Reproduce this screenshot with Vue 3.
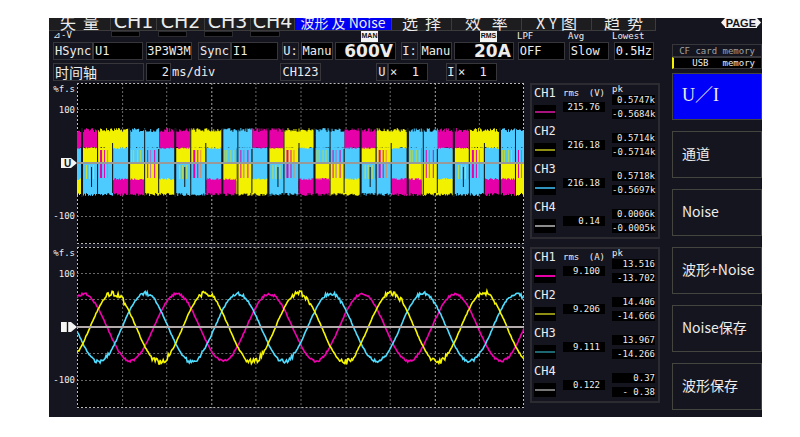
<script setup>
const tabs = [
  { t: '矢  量', w: 62, cjk: true },
  { t: 'CH1', w: 46 },
  { t: 'CH2', w: 48 },
  { t: 'CH3', w: 46 },
  { t: 'CH4', w: 44 },
  { t: '波形 及 Noise', w: 97, cjk: true, on: true },
  { t: '选  择', w: 60, cjk: true },
  { t: '效   率', w: 70, cjk: true },
  { t: 'X Y 图', w: 70, cjk: true },
  { t: '趋  势', w: 64, cjk: true },
]

const captions = [
  { t: '⊿-V', w: 58, c: 'cap tiny' },
  { w: 29, c: 'slot' }, { w: 18 },
  { w: 29, c: 'slot' }, { w: 17 },
  { w: 29, c: 'slot' }, { w: 17 },
  { w: 30, c: 'slot' }, { w: 81 },
  { t: 'MAN', w: 17, c: 'tag' }, { w: 102 },
  { t: 'RMS', w: 17, c: 'tag' }, { w: 20 },
  { t: 'LPF', w: 51, c: 'cap' },
  { t: 'Avg', w: 44, c: 'cap' },
  { t: 'Lowest', w: 48, c: 'cap' },
]

const settings = [
  { t: 'HSync', w: 40, c: 'box' },
  { t: 'U1', w: 50, c: 'box dark', b: true },
  { w: 3 },
  { t: '3P3W3M', w: 46, c: 'box dark mid', b: true },
  { w: 6 },
  { t: 'Sync', w: 33, c: 'box' },
  { t: 'I1', w: 47, c: 'box dark', b: true },
  { w: 4 },
  { t: 'U:', w: 17, c: 'box mid' },
  { w: 2 },
  { t: 'Manu', w: 32, c: 'box dark mid', b: true },
  { w: 2 },
  { t: '600V', w: 61, c: 'box dark big', b: true },
  { w: 5 },
  { t: 'I:', w: 17, c: 'box mid' },
  { w: 2 },
  { t: 'Manu', w: 32, c: 'box dark mid', b: true },
  { w: 2 },
  { t: '20A', w: 60, c: 'box dark big', b: true },
  { w: 4 },
  { t: 'OFF', w: 47, c: 'box dark', b: true },
  { w: 4 },
  { t: 'Slow', w: 40, c: 'box dark', b: true },
  { w: 5 },
  { t: '0.5Hz', w: 40, c: 'box dark', b: true },
]

const timing = [
  { t: '时间轴', w: 91, c: 'box zh' },
  { w: 2 },
  { t: '2', w: 25, c: 'box dark right', b: true },
  { t: 'ms/div', w: 109, c: 'plain' },
  { t: 'CH123', w: 41, c: 'box mid', b: true },
  { w: 55 },
  { t: 'U', w: 12, c: 'box mid' },
  { t: '×  1', w: 40, c: 'box dark', b: true },
  { w: 18 },
  { t: 'I', w: 10, c: 'box mid' },
  { t: '×  1', w: 41, c: 'box dark', b: true },
]

const ROW = 607
const share = (w) => ({ width: (w / ROW) * 100 + '%' })

const panels = [
  {
    unit: '(V)',
    rows: [
      { n: 'CH1', c: '#a8127c', v: '215.76', hi: '0.5747k', lo: '-0.5684k' },
      { n: 'CH2', c: '#8f8f14', v: '216.18', hi: '0.5714k', lo: '-0.5714k' },
      { n: 'CH3', c: '#2f93bd', v: '216.18', hi: '0.5718k', lo: '-0.5697k' },
      { n: 'CH4', c: '#8c8c8c', v: '0.14', hi: '0.0006k', lo: '-0.0005k' },
    ],
  },
  {
    unit: '(A)',
    rows: [
      { n: 'CH1', c: '#e600a6', v: '9.100', hi: '13.516', lo: '-13.702' },
      { n: 'CH2', c: '#8f8f14', v: '9.206', hi: '14.406', lo: '-14.666' },
      { n: 'CH3', c: '#1e6670', v: '9.111', hi: '13.967', lo: '-14.266' },
      { n: 'CH4', c: '#777777', v: '0.122', hi: '0.37', lo: '- 0.38' },
    ],
  },
]

const menu = ['U／I', '通道', 'Noise', '波形+Noise', 'Noise保存', '波形保存']

// Deterministic noise, so that the trace is the same on every draw
let seed = 7
const rnd = () => {
  seed = (seed * 16807) % 2147483647
  return seed / 2147483647
}

const C = '#4dcbff'
const Y = '#f2f200'
const M = '#e600a8'

// A filled block whose upper and lower edges are ragged
const ragged = (x0, x1, y0, y1, up, down) => {
  const a = Math.max(0, x0)
  const b = Math.min(446, x1)
  let d = `M${a} ${y0}`
  for (let x = a; x < b; x++) {
    const y = (y0 - rnd() * up).toFixed(1)
    d += `L${x} ${y}L${Math.min(b, x + 1)} ${y}`
  }
  for (let x = b; x > a; x--) {
    const y = (y1 + rnd() * down).toFixed(1)
    d += `L${x} ${y}L${Math.max(a, x - 1)} ${y}`
  }
  return d + 'Z'
}

const blocks = []
const sixth = 15.42
const full = sixth * 6
for (let k = -1; k < 5; k++) {
  const base = 36 + k * full
  const mids = [[C, C], [C, Y], [C, Y], [C, C], [Y, C], [Y, C]]
  mids.forEach(([u, l], i) => {
    const x0 = Math.round(base + i * sixth)
    const x1 = Math.round(base + (i + 1) * sixth)
    if (x1 <= 0 || x0 >= 446) return
    blocks.push({ d: ragged(x0, x1, 65, 81, 1, 0), c: u })
    blocks.push({ d: ragged(x0, x1, 81, 97, 0, 1), c: l })
  })
}
for (let k = -1; k < 5; k++) {
  const base = 36 + k * full
  const top = [[C, 1.1, 3], [M, 3, 5], [Y, 5, 7.05]]
  const low = [[M, 0, 2], [Y, 2, 4], [C, 4, 6]]
  for (const [c, a, b] of top) {
    const x0 = Math.round(base + a * sixth)
    const x1 = Math.round(base + b * sixth)
    if (x1 > 0 && x0 < 446) blocks.push({ d: ragged(x0, x1, 49, 64, 4, 2), c })
  }
  for (const [c, a, b] of low) {
    const x0 = Math.round(base + a * sixth)
    const x1 = Math.round(base + b * sixth)
    if (x1 > 0 && x0 < 446) blocks.push({ d: ragged(x0, x1, 97, 110, 2, 3), c })
  }
}

const stripes = []
const put = (x, y, h, c, w = 1) => {
  if (x >= 0 && x < 446) stripes.push({ x, y, h, c, w })
}
for (let k = -1; k < 5; k++) {
  const b = Math.round(36 + k * full)
  for (const o of [18, 20, 24, 27]) put(b + o, 67, 14, '#b4d84c')
  for (const o of [66, 69, 73]) put(b + o, 82, 14, '#c8de3c')
  for (const o of [34, 37, 41]) put(b + o, 67, 28, o === 37 ? '#b06cc8' : M)
  for (const o of [80, 84, 87]) put(b + o, 67, 28, o === 87 ? '#f08448' : M, o === 80 ? 2 : 1)
  for (const [o, y, h, w] of [[15, 45, 66, 2], [31, 46, 66, 1], [45, 66, 44, 1], [61, 45, 69, 2], [77, 46, 66, 1], [92, 60, 50, 1]]) {
    put(b + o, y, h, '#10161a', w)
  }
  put(b + 71, 84, 20, '#10161a')
}

const trace = (peak, amp, noise) => {
  let d = ''
  for (let x = 0; x <= 446; x++) {
    const p = ((x - peak) / full) * Math.PI * 2
    const crest = Math.abs(Math.cos(p - 0.15))
    const n = (rnd() - 0.5) * (crest > 0.8 ? noise : 1.2)
    const y = 80.5 - Math.cos(p) * amp + n
    d += (x ? 'L' : 'M') + x + ' ' + y.toFixed(1)
  }
  return d
}
const waves = [
  { d: trace(7, 33.5, 2.4), c: '#f000b0' },
  { d: trace(68, 34, 4), c: '#4fdcff' },
  { d: trace(36, 34.5, 5.6), c: '#f6f600' },
]

const vlines = [45, 89, 134, 178, 223, 268, 312, 357, 401]
const hlines = [27, 53, 80, 107, 134]
</script>

<template>
  <main class="device">
    <div class="left">
      <nav class="tabs">
        <button
          v-for="tab in tabs"
          :key="tab.t"
          class="tab"
          :class="{ on: tab.on, cjk: tab.cjk }"
          :style="share(tab.w)"
        >{{ tab.t }}</button>
      </nav>

      <div class="row captions">
        <span v-for="(s, i) in captions" :key="i" :class="s.c" :style="share(s.w)">{{ s.t }}</span>
      </div>
      <div class="row fields">
        <component
          :is="s.b ? 'button' : 'span'"
          v-for="(s, i) in settings"
          :key="i"
          :class="s.c"
          :style="share(s.w)"
        >{{ s.t }}</component>
      </div>
      <div class="row fields timing">
        <component
          :is="s.b ? 'button' : 'span'"
          v-for="(s, i) in timing"
          :key="i"
          :class="s.c"
          :style="share(s.w)"
        >{{ s.t }}</component>
      </div>

      <div class="body">
        <section class="scopes">
          <div v-for="kind in ['U', 'I']" :key="kind" class="scope">
            <div class="axis">
              <span>%f.s</span>
              <span class="hundred">100</span>
              <svg class="marker" viewBox="0 0 16 12" :aria-label="kind">
                <path d="M0 1H10L16 6L10 11H0Z" fill="#f4f4f4" />
                <text v-if="kind === 'U'" x="3" y="10" class="mark">U</text>
                <path v-else d="M6.500 1V11" stroke="#15151d" stroke-width="1.4" />
              </svg>
              <span class="minus">-100</span>
            </div>
            <svg class="plot" viewBox="0 0 446 161" preserveAspectRatio="none">
              <rect width="446" height="161" fill="#000" />
              <g class="grid">
                <path v-for="x in vlines" :key="'v' + x" :d="`M${x}.5 0V161`" :class="{ strong: x === 134 || x === 357 }" />
                <path v-for="y in hlines" :key="'h' + y" :d="`M0 ${y - 0.5}H446`" />
                <path class="edge" d="M.5 0V161M445.5 0V161M0 .5H446M0 160.5H446" />
              </g>
              <template v-if="kind === 'U'">
                <path v-for="(b, i) in blocks" :key="i" :d="b.d" :fill="b.c" />
                <rect v-for="(s, i) in stripes" :key="'s' + i" :x="s.x" :y="s.y" :width="s.w" :height="s.h" :fill="s.c" />
                <path d="M0 80H446" stroke="#999" stroke-width="2" />
              </template>
              <template v-else>
                <path v-for="w in waves" :key="w.c" :d="w.d" fill="none" :stroke="w.c" stroke-width="1.6" />
                <path d="M0 80H446" stroke="#b4acac" stroke-width="2" />
              </template>
            </svg>
          </div>
        </section>

        <section class="readings">
          <div v-for="p in panels" :key="p.unit" class="panel">
            <div v-for="(r, i) in p.rows" :key="r.n" class="reading">
              <div class="chan">
                <span class="name">{{ r.n }}</span>
                <span class="swatch"><svg viewBox="0 0 20 2"><rect width="20" height="2" :fill="r.c" /></svg></span>
              </div>
              <div class="rms">
                <span class="unit"><template v-if="i === 0"><span>rms</span><span>{{ p.unit }}</span></template></span>
                <span class="num">{{ r.v }}</span>
              </div>
              <div class="peak">
                <span class="pk">{{ i === 0 ? 'pk' : '' }}</span>
                <span class="num">{{ r.hi }}</span>
                <span class="num">{{ r.lo }}</span>
              </div>
            </div>
          </div>
        </section>
      </div>
    </div>

    <aside class="side">
      <div class="page">
        <svg viewBox="0 0 4 10"><path d="M4 0L0 4.500L4 9Z" fill="#f4f4f4" /></svg>
        <span>PAGE</span>
        <svg viewBox="0 0 4 10"><path d="M0 0L4 4.500L0 9Z" fill="#f4f4f4" /></svg>
      </div>
      <div class="media">
        <span class="cf">CF card memory</span>
        <span class="usb"><span>USB</span><span>memory</span></span>
      </div>
      <nav class="menu">
        <button v-for="(m, i) in menu" :key="m" :class="{ active: i === 0 }">{{ m }}</button>
      </nav>
    </aside>
  </main>
</template>

<style>
body {
  background: #fff;
}
</style>

<style scoped>
* {
  box-sizing: border-box;
}
button {
  margin: 0;
  padding: 0;
  border: 0;
  border-radius: 0;
  background: none;
  color: inherit;
  font: inherit;
  text-align: left;
}
.device {
  display: grid;
  grid-template-columns: minmax(0, 1fr) 90px;
  column-gap: 12px;
  margin: 18px 38px 20px 49px;
  padding-bottom: 7px;
  background: #15151f;
  color: #ececec;
  font: 12px/16px "DejaVu Sans Mono", "Noto Sans CJK SC", monospace;
  overflow: hidden;
}
.left {
  min-width: 0;
}
.tabs {
  display: flex;
  height: 13px;
  margin-right: 4px;
  background: #1d1d1f;
  overflow: hidden;
}
.tab {
  display: flex;
  align-items: flex-end;
  justify-content: center;
  height: 13px;
  border-right: 1px solid #3c3c3c;
  border-bottom: 1px solid #3c3c3c;
  font: 19px/18px "DejaVu Sans", sans-serif;
  white-space: pre;
}
.tab.cjk {
  font: 16px/16px "Noto Sans CJK SC", sans-serif;
}
.tab.on {
  background: #0000f4;
  font-size: 14px;
}
.row {
  display: flex;
  padding-left: 4px;
  white-space: pre;
}
.row > * {
  flex: none;
}
.captions {
  height: 11px;
  font: 10px/10px "DejaVu Sans Mono", monospace;
}
.cap {
  font-size: 9px;
}
.tiny {
  line-height: 8px;
}
.slot {
  height: 6px;
  border: 1px solid #2c2c30;
  background: #000;
}
.tag {
  background: #f4f4f4;
  color: #111;
  font: bold 7px/10px "Liberation Sans", sans-serif;
  text-align: center;
}
.fields {
  height: 19px;
}
.timing {
  margin: 2px 0 1px;
}
.box {
  height: 18px;
  padding-left: 1px;
  border: 1px solid #37373b;
}
.dark {
  background: #000;
}
.mid {
  padding: 0;
  text-align: center;
}
.right {
  padding-right: 1px;
  text-align: right;
}
.big {
  padding-right: 2px;
  font: bold 17px/16px "DejaVu Sans", sans-serif;
  text-align: right;
}
.zh {
  font: 14px/16px "Noto Sans CJK SC", sans-serif;
}
.plain {
  padding-left: 1px;
  line-height: 18px;
}
.body {
  display: grid;
  grid-template-columns: minmax(0, 1fr) 130px;
  column-gap: 5px;
}
.scopes {
  display: grid;
  row-gap: 3px;
  align-content: start;
}
.scope {
  display: grid;
  grid-template-columns: 28px minmax(0, 1fr);
  padding-right: 1px;
}
.axis {
  display: flex;
  flex-direction: column;
  align-items: flex-end;
  padding: 1px 2px 0 0;
  font-size: 9px;
  line-height: 10px;
}
.hundred {
  margin-top: 11px;
}
.marker {
  width: 16px;
  height: 12px;
  margin: 42px -2px 42px 0;
}
.mark {
  fill: #15151d;
  font: bold 10px "Liberation Sans", sans-serif;
}
.plot {
  display: block;
  width: 100%;
  height: 161px;
}
.grid {
  fill: none;
  stroke: #6a6a6a;
  stroke-dasharray: 2 2;
}
.strong {
  stroke: #a8a8a8;
}
.edge {
  stroke: #bcbcbc;
}
.readings {
  display: grid;
  row-gap: 8px;
  align-content: start;
}
.panel {
  padding: 1px 3px 0 2px;
  border: 2px solid #2b2b31;
}
.reading {
  display: grid;
  grid-template-columns: 22px 42px 43px;
  justify-content: space-between;
  height: 38px;
}
.reading:last-child {
  height: 37px;
}
.name {
  display: block;
  height: 19px;
  font: 12px/15px "DejaVu Sans Mono", monospace;
}
.swatch {
  display: flex;
  align-items: center;
  height: 14px;
  padding: 0 1px;
  background: #000;
}
.swatch svg {
  display: block;
  width: 100%;
  height: 2px;
}
.rms,
.peak {
  font: 9px/10px "DejaVu Sans Mono", monospace;
}
.unit {
  display: flex;
  justify-content: space-between;
  height: 16px;
  line-height: 14px;
}
.num {
  display: block;
  height: 10px;
  background: #000;
  text-align: right;
}
.rms .num {
  padding-right: 5px;
}
.peak .num + .num {
  margin-top: 4px;
}
.pk {
  display: block;
  height: 9px;
  line-height: 7px;
}
.side {
  display: flex;
  flex-direction: column;
}
.page {
  display: flex;
  align-self: flex-end;
  height: 10px;
  margin: 0 1px 16px 0;
}
.page span {
  padding: 0 1px;
  background: #f4f4f4;
  color: #15151d;
  font: bold 11px/10px "Liberation Sans", sans-serif;
}
.page svg {
  width: 4px;
  height: 10px;
}
.media {
  display: grid;
  font: 9px/10px "DejaVu Sans Mono", monospace;
  text-align: right;
}
.cf {
  height: 13px;
  padding: 1px 6px 0 0;
  border: 1px solid #37373b;
  color: #a2a2a2;
}
.usb {
  display: flex;
  justify-content: flex-end;
  column-gap: 14px;
  height: 12px;
  padding-right: 6px;
  border: 1px solid #37373b;
  border-left: 2px solid #f2f200;
  background: #000;
}
.menu {
  display: grid;
  row-gap: 11px;
  padding-top: 4px;
}
.menu button {
  height: 47px;
  padding: 0 0 3px 9px;
  border: 1px solid #45453f;
  font: 14px/20px "Noto Sans CJK SC", sans-serif;
}
.menu .active {
  background: #0000fa;
  font: 18px/20px "Liberation Serif", "Noto Sans CJK SC", serif;
}
</style>
